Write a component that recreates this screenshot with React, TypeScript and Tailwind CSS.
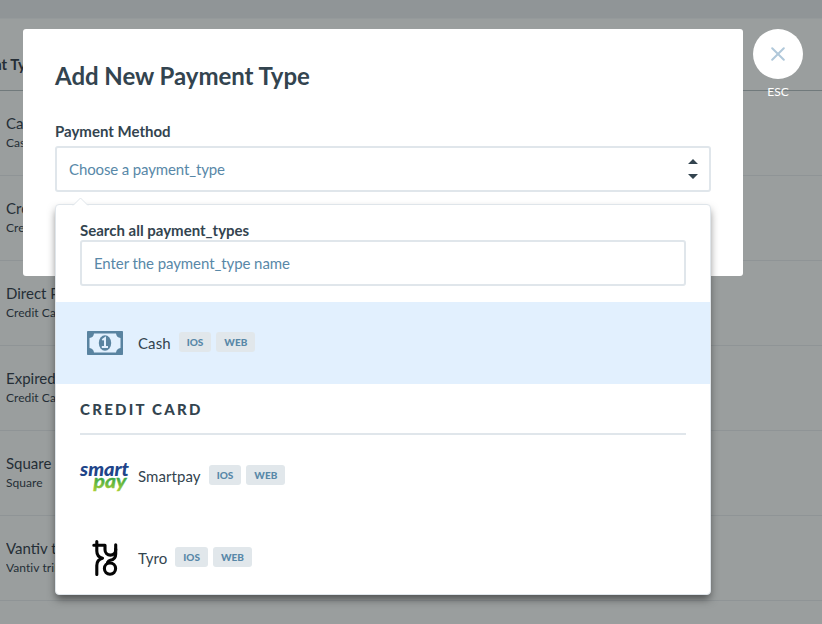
import React from "react";

const rows = [
  { name: "Cash", kind: "Cash" },
  { name: "Credit Card", kind: "Credit Card" },
  { name: "Direct Payment", kind: "Credit Card" },
  { name: "Expired Card", kind: "Credit Card" },
  { name: "Square", kind: "Square" },
  { name: "Vantiv triPOS", kind: "Vantiv triPOS" },
];

function PaymentTable() {
  return (
    <div className="h-[624px] w-full overflow-hidden bg-[#9a9e9e] text-[#252e36]">
      <div className="h-[19px] border-b border-[#959a9b] bg-[#909597]" />
      <div className="flex h-[72px] items-center border-b border-[#717a7c]">
        <div className="flex w-[26px] justify-end pt-[20px] text-[15px] font-bold whitespace-nowrap">
          nt Ty
        </div>
      </div>
      {rows.map((row) => (
        <div key={row.name} className="h-[85px] border-b border-[#8f9496] pt-[21px] pl-[6px] whitespace-nowrap">
          <div className="w-[110px] overflow-hidden text-[15px] leading-[22px]">{row.name}</div>
          <div className="mt-px w-[110px] overflow-hidden text-[12px] leading-[16px] tracking-[0.06px]">{row.kind}</div>
        </div>
      ))}
    </div>
  );
}

function Badge({ label }: { label: string }) {
  return (
    <span className="flex h-[20px] items-center rounded-[3px] bg-[#e1e7eb] px-2 text-[10px] font-black text-[#5888a8]">
      {label}
    </span>
  );
}

function Option({ name, icon, active }: { name: string; icon: React.ReactNode; active?: boolean }) {
  return (
    <div className={`flex h-[82px] items-center pl-6 ${active ? "bg-[#e2f0fe]" : ""}`}>
      <div className="flex w-[50px] justify-center">{icon}</div>
      <span className="ml-2 text-[15px] leading-[22px] tracking-[0.08px]">{name}</span>
      <div className="mb-[2px] ml-2 flex gap-[5px]">
        <Badge label="IOS" />
        <Badge label="WEB" />
      </div>
    </div>
  );
}

function CashIcon() {
  return (
    <svg width="36" height="24" viewBox="0 0 36 24">
      <rect width="36" height="24" rx="0.8" fill="#5983a0" />
      <path d="M7 2.5H29Q29.5 6.5 33.5 7V17Q29.5 17.5 29 21.5H7Q6.5 17.5 2.5 17V7Q6.5 6.5 7 2.5Z" fill="#e2f0fe" />
      <ellipse cx="18" cy="12" rx="6.2" ry="7.8" fill="#5983a0" />
      <path d="M15.3 9L18 7.2V16M14.8 16H21" fill="none" stroke="#e2f0fe" strokeWidth="2" />
    </svg>
  );
}

function SmartpayLogo() {
  return (
    <svg className="shrink-0 overflow-visible" width="50" height="34" viewBox="0 0 50 34" fontFamily="Lato, sans-serif" fontStyle="italic">
      <defs>
        <linearGradient id="pay" x1="0" y1="0" x2="0" y2="1">
          <stop offset="0.3" stopColor="#30a447" />
          <stop offset="1" stopColor="#b4d334" />
        </linearGradient>
      </defs>
      <text x="0" y="16.8" fontSize="18" fontWeight="900" fill="#204489" textLength="49" lengthAdjust="spacingAndGlyphs">smart</text>
      <text x="13.5" y="29.4" fontSize="18.5" fontWeight="700" fill="url(#pay)" stroke="url(#pay)" strokeWidth="0.4" textLength="33" lengthAdjust="spacingAndGlyphs">pay</text>
    </svg>
  );
}

function TyroLogo() {
  return (
    <svg className="mb-[2px]" width="26" height="38" viewBox="0 0 26 38" fill="none" stroke="#050505" strokeWidth="3.1" strokeLinecap="round" strokeLinejoin="round">
      <path d="M4.8 3.5V13Q4.8 18.8 10.5 20.2Q4.8 21.6 4.8 27.5V36.5" />
      <path d="M1.8 7.2H13V11.8A5.35 5.35 0 0 0 23.7 11.8V6.8" />
      <path d="M23.7 11V16Q23.7 21.4 18.2 22.3Q16.5 22.6 15.5 24.5" />
      <circle cx="18" cy="30.6" r="5.6" />
    </svg>
  );
}

function Dropdown() {
  return (
    <div className="absolute top-[175px] left-[32px] h-[391px] w-[656px] rounded-[4px] border border-[#dfe5ea] bg-white shadow-[0_5px_9px_-1px_rgba(0,0,0,0.5)]">
      <svg className="absolute -top-[8px] left-[16px]" width="18" height="9" viewBox="0 0 18 9">
        <path d="M1 8.5L8.5 1L16 8.5" fill="#fff" stroke="#dfe5ea" />
        <path d="M1.5 9H15.5" stroke="#fff" />
      </svg>
      <div className="px-6 pt-[15px]">
        <div className="text-[15px] leading-[20px] font-bold">Search all payment_types</div>
        <div className="flex h-[46px] items-center rounded-[3px] border-2 border-[#e0e6eb] px-3 text-[15px] tracking-[-0.08px] text-[#5888a8]">
          Enter the payment_type name
        </div>
      </div>
      <div className="mt-4">
        <Option name="Cash" icon={<CashIcon />} active />
      </div>
      <div className="mx-6 flex h-[51px] items-center border-b-2 border-[#e0e6eb] pt-[2px] text-[15px] font-black tracking-[2.25px]">
        CREDIT CARD
      </div>
      <Option name="Smartpay" icon={<SmartpayLogo />} />
      <Option name="Tyro" icon={<TyroLogo />} />
    </div>
  );
}

export default function App() {
  return (
    <div className="relative h-[624px] w-full overflow-hidden font-['Lato',sans-serif] text-[#33444f]">
      <PaymentTable />
      <div className="absolute inset-x-0 top-[29px] flex items-start gap-[10px] pl-[23px]">
        <div className="relative h-[247px] w-[720px] rounded-[3px] bg-white px-8 pt-[30px]">
          <h1 className="text-[24px] leading-[34px] font-bold tracking-[-0.04px]">Add New Payment Type</h1>
          <div className="mt-[27px] text-[15px] leading-[22px] font-bold">Payment Method</div>
          <div className="mt-[4px] flex h-[46px] w-[656px] items-center justify-between rounded-[3px] border-2 border-[#e0e6eb] pr-[11px] pl-3 text-[15px] tracking-[-0.13px] text-[#5888a8]">
            Choose a payment_type
            <svg width="10" height="20" viewBox="0 0 10 20" fill="#33444f">
              <path d="M0 5L5 0L10 5ZM0 15H10L5 20Z" />
            </svg>
          </div>
          <Dropdown />
        </div>
        <div className="flex w-[50px] flex-col items-center text-[12px] text-white">
          <div className="flex size-[50px] items-center justify-center rounded-full bg-white">
            <svg width="14" height="14" viewBox="0 0 14 14" stroke="#b0c8da" strokeWidth="2" strokeLinecap="round">
              <path d="M1.2 1.2L12.8 12.8M12.8 1.2L1.2 12.8" />
            </svg>
          </div>
          <span className="mt-[5px] leading-[16px]">ESC</span>
        </div>
      </div>
    </div>
  );
}
